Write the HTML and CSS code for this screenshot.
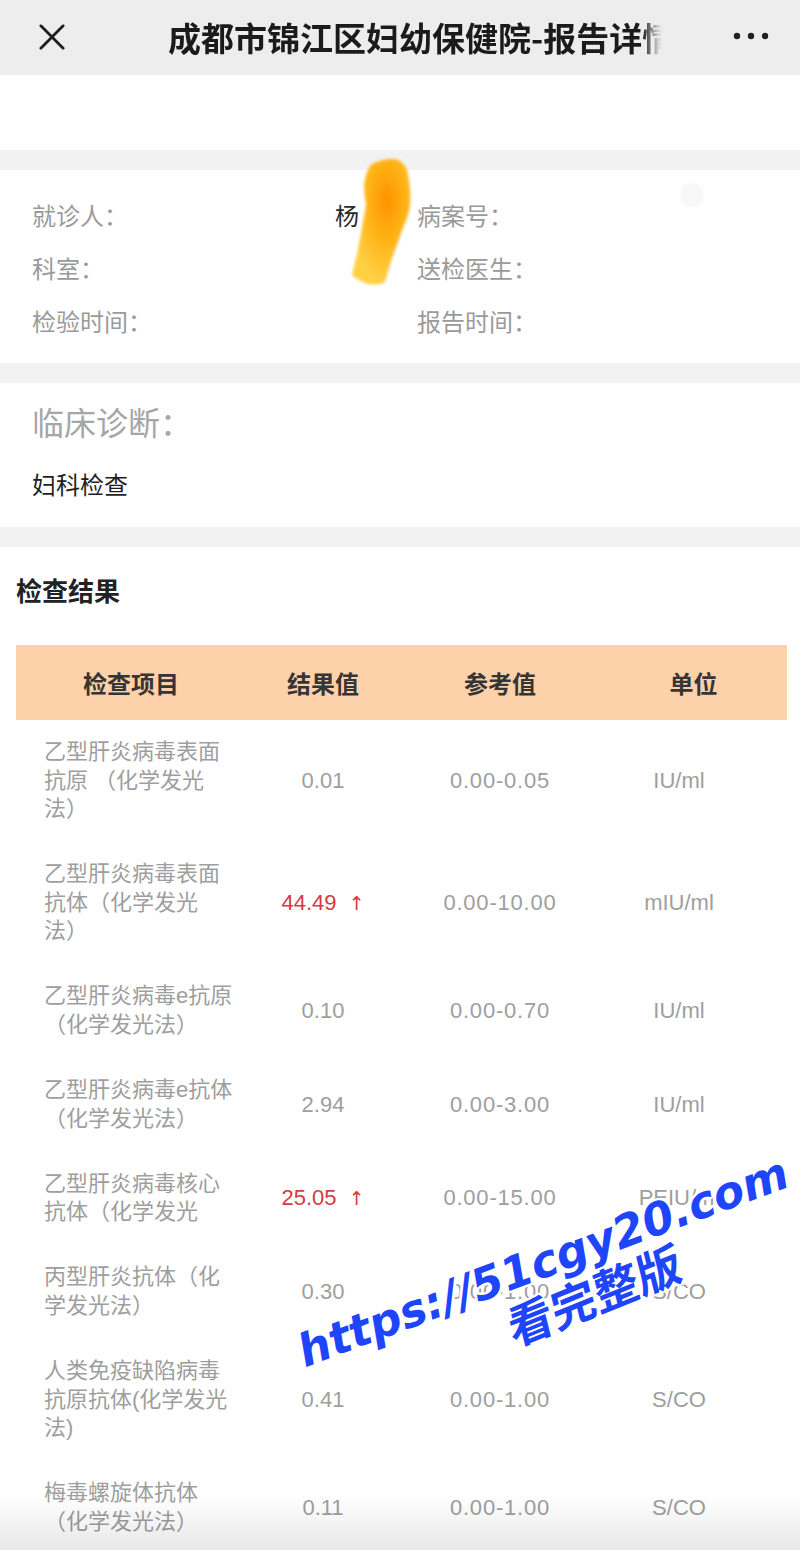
FILE: index.html
```html
<!DOCTYPE html>
<html lang="zh-CN">
<head>
<meta charset="utf-8">
<title>报告详情</title>
<link rel="stylesheet" href="styles.css">
</head>
<body>
<header class="nav">
  <svg class="nav-close" viewBox="0 0 28 28"><path d="M2 2 L26 26 M26 2 L2 26" stroke="#1e1e1e" stroke-width="3" stroke-linecap="round" fill="none"/></svg>
  <div class="nav-title">成都市锦江区妇幼保健院-报告详情</div>
  <svg class="nav-more" viewBox="0 0 36 8"><circle cx="4" cy="4" r="3.2" fill="#222"/><circle cx="18" cy="4" r="3.2" fill="#222"/><circle cx="32" cy="4" r="3.2" fill="#222"/></svg>
</header>
<div class="blank"></div>
<div class="gap"></div>
<section class="info">
  <div class="info-cell"><span>就诊人：</span><span class="info-val">杨</span></div>
  <div class="info-cell"><span>病案号：</span></div>
  <div class="info-cell"><span>科室：</span></div>
  <div class="info-cell"><span>送检医生：</span></div>
  <div class="info-cell"><span>检验时间：</span></div>
  <div class="info-cell"><span>报告时间：</span></div>
</section>
<div class="gap"></div>
<section class="diag">
  <div class="diag-label">临床诊断：</div>
  <div class="diag-val">妇科检查</div>
</section>
<div class="gap"></div>
<section class="results">
  <h2 class="results-title">检查结果</h2>
  <div class="thead">
    <div>检查项目</div><div>结果值</div><div>参考值</div><div>单位</div>
  </div>
  <div class="row"><div class="item">乙型肝炎病毒表面抗原 （化学发光法）</div><div class="val">0.01</div><div class="val ref">0.00-0.05</div><div class="val unit">IU/ml</div></div>
  <div class="row"><div class="item">乙型肝炎病毒表面抗体（化学发光法）</div><div class="val high">44.49 <span class="arrow">↑</span></div><div class="val ref">0.00-10.00</div><div class="val unit">mIU/ml</div></div>
  <div class="row"><div class="item">乙型肝炎病毒e抗原（化学发光法）</div><div class="val">0.10</div><div class="val ref">0.00-0.70</div><div class="val unit">IU/ml</div></div>
  <div class="row"><div class="item">乙型肝炎病毒e抗体（化学发光法）</div><div class="val">2.94</div><div class="val ref">0.00-3.00</div><div class="val unit">IU/ml</div></div>
  <div class="row"><div class="item">乙型肝炎病毒核心抗体（化学发光</div><div class="val high">25.05 <span class="arrow">↑</span></div><div class="val ref">0.00-15.00</div><div class="val unit">PEIU/ml</div></div>
  <div class="row"><div class="item">丙型肝炎抗体（化学发光法）</div><div class="val">0.30</div><div class="val ref">0.00-1.00</div><div class="val unit">S/CO</div></div>
  <div class="row"><div class="item">人类免疫缺陷病毒抗原抗体(化学发光法)</div><div class="val">0.41</div><div class="val ref">0.00-1.00</div><div class="val unit">S/CO</div></div>
  <div class="row"><div class="item">梅毒螺旋体抗体（化学发光法）</div><div class="val">0.11</div><div class="val ref">0.00-1.00</div><div class="val unit">S/CO</div></div>
</section>

<svg class="scribble" viewBox="0 0 80 135">
  <defs>
    <radialGradient id="sg" cx="0.6" cy="0.33" r="0.65">
      <stop offset="0" stop-color="#ff9200"/>
      <stop offset="0.4" stop-color="#ffad10"/>
      <stop offset="1" stop-color="#ffd042"/>
    </radialGradient>
    <filter id="sb"><feGaussianBlur stdDeviation="1.4"/></filter>
  </defs>
  <path d="M32 9 C42 4 52 3 58 5 C64 8 68 14 68 20 C70 30 71 40 70 50 C69 58 67 64 64 70 C60 80 58 88 55 95 C51 106 48 116 45 127 C40 130 34 130 28 129 C22 127 16 124 12 120 C14 112 16 103 18 95 C19 87 21 80 22 73 C23 65 25 57 26 50 C25 43 24 36 24 30 C25 22 27 14 32 9 Z" fill="url(#sg)" filter="url(#sb)"/>
</svg>
<div class="ghost-dot"></div>

<div class="wm wm-url">https://51cgy20.com</div>
<div class="wm wm-cn">看完整版</div>
<div class="bottom-fade"></div>
</body>
</html>
```

FILE: styles.css
```css
html, body {
  margin: 0;
  padding: 0;
}

body {
  width: 800px;
  height: 1550px;
  overflow: hidden;
  position: relative;
  background: #ffffff;
  font-family: "Liberation Sans", "Noto Sans CJK SC", sans-serif;
  text-spacing-trim: space-all;
}

.nav {
  height: 75px;
  background: #ededed;
  display: flex;
  align-items: center;
}

.nav-close {
  width: 26px;
  height: 26px;
  margin-left: 39px;
  margin-top: -2px;
}

.nav-title {
  margin-left: 103px;
  width: 494px;
  font-family: "Noto Sans CJK SC", sans-serif;
  font-size: 33px;
  font-weight: 700;
  color: #1b1b1b;
  white-space: nowrap;
  overflow: hidden;
  margin-top: -2px;
  -webkit-mask-image: linear-gradient(to right, #000 474px, rgba(0,0,0,0.15) 490px, transparent 494px);
  mask-image: linear-gradient(to right, #000 474px, rgba(0,0,0,0.15) 490px, transparent 494px);
}

.nav-more {
  width: 36px;
  height: 8px;
  margin-left: auto;
  margin-right: 31px;
  margin-top: -4px;
}

.blank {
  height: 75px;
}

.gap {
  height: 20px;
  background: #f2f2f2;
}

.info {
  display: grid;
  grid-template-columns: 385px 1fr;
  grid-auto-rows: 53px;
  align-items: center;
  padding: 18px 0 16px 32px;
  font-size: 24px;
  color: #9a9a9a;
}

.info-cell {
  display: flex;
  justify-content: space-between;
  padding-right: 58px;
}

.info-val {
  color: #2a2a2a;
}

.diag {
  padding: 19px 32px 24px;
}

.diag-label {
  font-size: 32px;
  line-height: 44px;
  color: #a6a6a6;
}

.diag-val {
  margin-top: 23px;
  font-size: 24px;
  line-height: 34px;
  color: #1f1f1f;
}

.results {
  padding: 27px 13px 0 16px;
}

.results-title {
  margin: 0 0 35px;
  font-size: 26px;
  line-height: 36px;
  font-weight: 700;
  color: #222;
}

.thead {
  display: grid;
  grid-template-columns: 230px 154px 200px 187px;
  height: 75px;
  align-items: center;
  text-align: center;
  background: #fdd1a9;
  font-size: 24px;
  font-weight: 700;
  color: #353535;
}

.row {
  display: grid;
  grid-template-columns: 230px 154px 200px 187px;
  align-items: center;
  padding: 18px 0 18.7px;
}

.item {
  padding: 0 8px 0 28px;
  font-size: 22px;
  line-height: 28.5px;
  color: #9e9e9e;
}

.val {
  text-align: center;
  font-size: 22px;
  color: #9e9e9e;
}

.ref {
  letter-spacing: 0.8px;
}

.unit {
  padding-right: 29px;
}

.high {
  color: #d23c42;
}

.arrow {
  font-family: "DejaVu Sans", sans-serif;
  font-size: 19px;
  margin-left: 6px;
}

.scribble {
  position: absolute;
  left: 340px;
  top: 155px;
  width: 80px;
  height: 135px;
}

.ghost-dot {
  position: absolute;
  left: 680px;
  top: 183px;
  width: 24px;
  height: 24px;
  border-radius: 50%;
  background: #f8f8f8;
}

.wm {
  position: absolute;
  color: #1f45fb;
  font-weight: 700;
  white-space: nowrap;
  text-shadow: 2px 0 0 #fff, -2px 0 0 #fff, 0 2px 0 #fff, 0 -2px 0 #fff, 2px 2px 0 #fff, -2px -2px 0 #fff, 2px -2px 0 #fff, -2px 2px 0 #fff;
}

.wm-url {
  left: 543px;
  top: 1262px;
  font-family: "DejaVu Sans", sans-serif;
  font-style: italic;
  font-size: 45px;
  line-height: 1;
  transform: translate(-50%, -50%) rotate(-20.5deg);
}

.wm-cn {
  left: 594px;
  top: 1293px;
  font-family: "Noto Sans CJK SC", sans-serif;
  font-size: 46px;
  line-height: 1;
  transform: translate(-50%, -50%) rotate(-22deg) skewX(-8deg);
}

.bottom-fade {
  position: absolute;
  left: 0;
  right: 0;
  bottom: 0;
  height: 55px;
  background: linear-gradient(to bottom, rgba(0,0,0,0), rgba(0,0,0,0.09));
}
```
